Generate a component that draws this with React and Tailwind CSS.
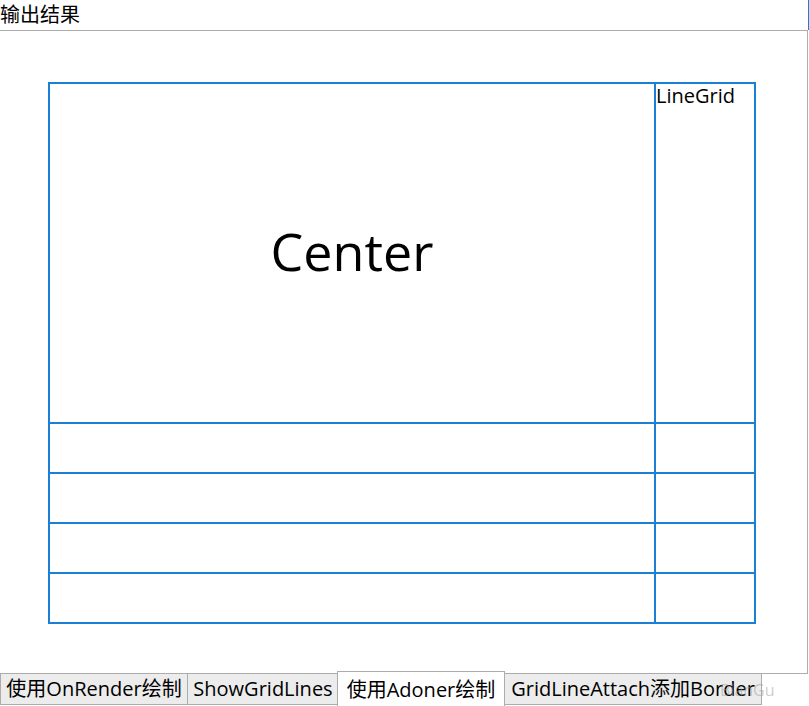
import React from 'react';

const font = { fontFamily: '"Segoe UI", "Open Sans", "Noto Sans CJK SC", sans-serif' };

const tabs = [
  { label: '使用OnRender绘制', w: 'w-[188px]' },
  { label: 'ShowGridLines', w: 'w-[152px]' },
  { label: '使用Adoner绘制', w: 'w-[168px]', active: true },
  { label: 'GridLineAttach添加Border', w: 'w-[258px]' },
];

const App = () => {
  return (
    <div className="relative w-[809px] h-[706px] bg-white flex flex-col overflow-hidden text-black" style={font}>
      {/* header */}
      <div className="h-[30px] shrink-0 flex items-center border-r border-[#1a7fd6] text-[20px] leading-none">
        输出结果
      </div>

      {/* tab content */}
      <div className="h-[644px] shrink-0 w-[808px] border-t border-r border-b border-[#acacac] pl-[48px] pt-[51px]">
        <div className="grid grid-cols-[604px_98px] grid-rows-[338px_48px_48px_48px_48px] gap-[2px] p-[2px] bg-[#1a7fd6] w-[708px]">
          <div className="bg-white flex items-center justify-center text-[52px] leading-none pb-[4px]">
            Center
          </div>
          <div className="bg-white text-[20px] leading-[24px]">LineGrid</div>
          <div className="bg-white" />
          <div className="bg-white" />
          <div className="bg-white" />
          <div className="bg-white" />
          <div className="bg-white" />
          <div className="bg-white" />
          <div className="bg-white" />
          <div className="bg-white" />
        </div>
      </div>

      {/* tabs */}
      <div className="flex items-start h-[33px] -mt-px">
        {tabs.map((t) =>
          t.active ? (
            <div
              key={t.label}
              className={`${t.w} h-[35px] -mt-[2px] -mx-px relative z-10 bg-white border border-b-0 border-[#acacac] flex items-center justify-center text-[20px] leading-none pt-[2px]`}
            >
              {t.label}
            </div>
          ) : (
            <div
              key={t.label}
              className={`${t.w} h-[32px] bg-[#ececec] border border-[#acacac] -mr-px flex items-center justify-center text-[20px] leading-none`}
            >
              {t.label}
            </div>
          )
        )}
      </div>

      {/* watermark */}
      <div className="absolute left-[720px] top-[682px] text-[16px] leading-none text-[#9a9a9a]/50 pointer-events-none z-20">
        BianGu
      </div>
    </div>
  );
};

export default App;
